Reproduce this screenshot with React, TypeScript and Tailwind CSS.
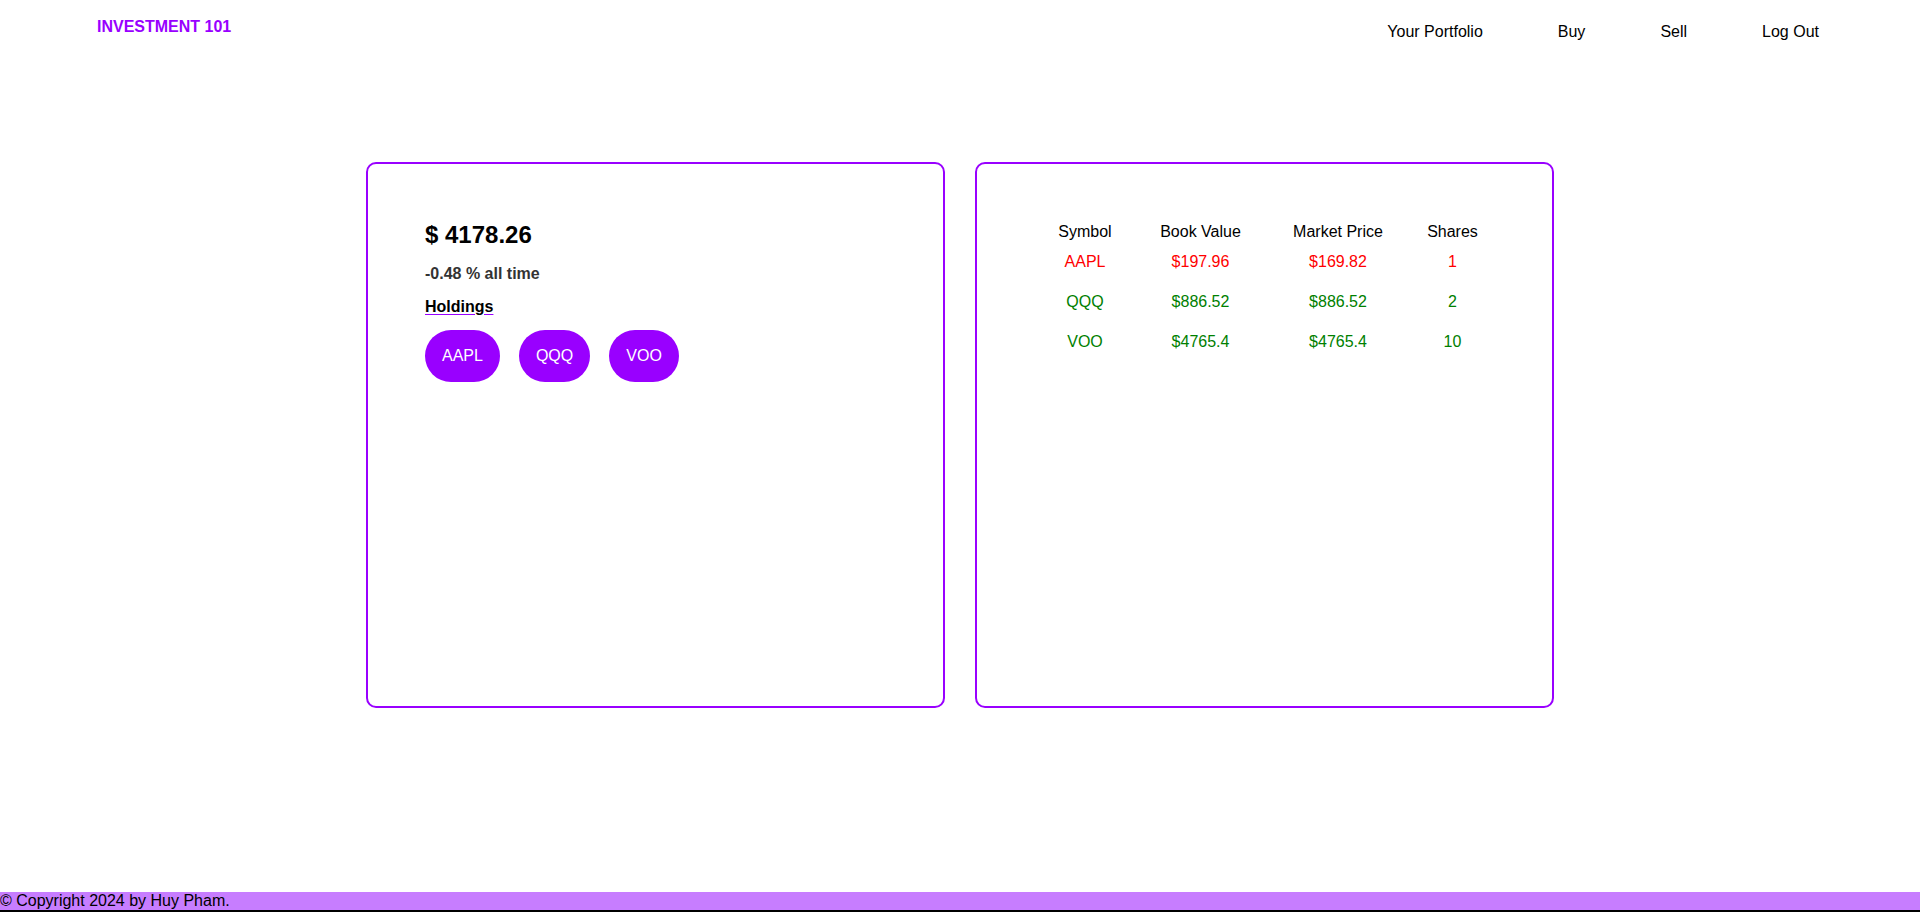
const holdings = ['AAPL', 'QQQ', 'VOO'];

const rows = [
  { symbol: 'AAPL', book: '$197.96', market: '$169.82', shares: 1, down: true },
  { symbol: 'QQQ', book: '$886.52', market: '$886.52', shares: 2, down: false },
  { symbol: 'VOO', book: '$4765.4', market: '$4765.4', shares: 10, down: false },
];

const navLinks = ['Your Portfolio', 'Buy', 'Sell', 'Log Out'];

export default function App() {
  return (
    <div className="min-h-screen flex flex-col bg-white text-black font-['Liberation_Sans',Arial,sans-serif]">
      <header className="flex justify-between items-start pl-[97px] pr-[101px]">
        <a className="pt-[18px] text-[16px] leading-[18px] font-bold text-[#9900ff]">
          INVESTMENT 101
        </a>
        <nav className="flex gap-[75px] pt-[23px]">
          {navLinks.map((link) => (
            <a key={link} className="text-[16px] leading-[18px] text-black">
              {link}
            </a>
          ))}
        </nav>
      </header>

      <main className="flex justify-center gap-[30px] mt-[121px]">
        <section className="w-[579px] h-[546px] border-2 border-[#9900ff] rounded-[10px] pt-[57px] px-[57px]">
          <h2 className="text-[24px] leading-[28px] font-bold">$ 4178.26</h2>
          <p className="mt-[16px] text-[16px] leading-[18px] font-bold text-[#333333]">
            -0.48 % all time
          </p>
          <h3 className="mt-[15px] text-[16px] leading-[18px] font-bold underline decoration-[#9900ff] underline-offset-2">
            Holdings
          </h3>
          <div className="mt-[14px] flex gap-[19px]">
            {holdings.map((symbol) => (
              <button
                key={symbol}
                className="h-[52px] px-[17px] rounded-full bg-[#9900ff] text-white text-[16px] leading-[18px]"
              >
                {symbol}
              </button>
            ))}
          </div>
        </section>

        <section className="w-[579px] h-[546px] border-2 border-[#9900ff] rounded-[10px] pt-[59px] flex justify-center">
          <div className="w-[460px] text-[16px] leading-[18px]">
            <div className="grid grid-cols-[101px_130px_145px_84px] h-[30px] text-center">
              <span>Symbol</span>
              <span>Book Value</span>
              <span>Market Price</span>
              <span>Shares</span>
            </div>
            {rows.map((row) => (
              <div
                key={row.symbol}
                className={
                  row.down
                    ? 'grid grid-cols-[101px_130px_145px_84px] h-[40px] text-center text-[#ff0000]'
                    : 'grid grid-cols-[101px_130px_145px_84px] h-[40px] text-center text-[#008000]'
                }
              >
                <span>{row.symbol}</span>
                <span>{row.book}</span>
                <span>{row.market}</span>
                <span>{row.shares}</span>
              </div>
            ))}
          </div>
        </section>
      </main>

      <footer className="mt-auto bg-[#c77dff] border-b-2 border-black text-[16px] leading-[18px] text-black">
        © Copyright 2024 by Huy Pham.
      </footer>
    </div>
  );
}
